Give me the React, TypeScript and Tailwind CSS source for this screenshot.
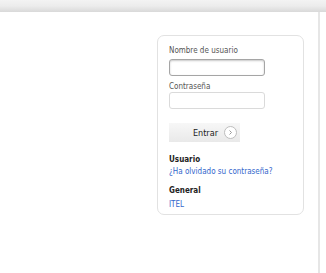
import React from "react";

export default function App() {
  const font = { fontFamily: '"DejaVu Sans Condensed", "DejaVu Sans", sans-serif', fontStretch: "condensed" } as React.CSSProperties;
  return (
    <div className="w-[326px] h-[273px] bg-white overflow-hidden flex flex-col" style={font}>
      <div className="h-[12px] w-full bg-gradient-to-b from-[#f3f3f3] via-[#ececec] to-[#d9d9d9]" />
      <div className="flex flex-1">
        <div className="w-[318px] flex">
          <div className="ml-[157px] mt-[23px] w-[147px] h-[180px] border border-[#e2e2e2] rounded-[7px] px-[11px] pt-[9px] text-[8px] leading-[12px]">
            <div className="text-[#555]">Nombre de usuario</div>
            <div className="mt-[2px] w-[96px] h-[17px] rounded-[3px] border border-[#a5a5a5] shadow-[inset_0_1px_2px_rgba(0,0,0,0.22)] bg-white" />
            <div className="text-[#555] mt-[6px] leading-[10px]">Contraseña</div>
            <div className="w-[96px] h-[17px] rounded-[3px] border border-[#dadada] bg-white" />
            <div className="mt-[14px] w-[71px] h-[19px] bg-gradient-to-b from-[#f7f7f7] to-[#e9e9e9] flex items-center justify-end pr-[3px] gap-[6px]">
              <span className="text-[9px] text-[#222]">Entrar</span>
              <span className="w-[13px] h-[13px] rounded-full border border-[#bdbdbd] bg-white flex items-center justify-center">
                <svg width="7" height="7" viewBox="0 0 7 7">
                  <path d="M2.5 1.5 L4.5 3.5 L2.5 5.5" fill="none" stroke="#999" strokeWidth="1" />
                </svg>
              </span>
            </div>
            <div className="mt-[12px] font-bold text-[#222]">Usuario</div>
            <div className="text-[#3366cc]">¿Ha olvidado su contraseña?</div>
            <div className="mt-[7px] font-bold text-[#222]">General</div>
            <div className="mt-[2px] text-[#3366cc]">ITEL</div>
          </div>
        </div>
        <div className="w-[2px] bg-[#e6e6e6]" />
        <div className="flex-1" />
      </div>
    </div>
  );
}
